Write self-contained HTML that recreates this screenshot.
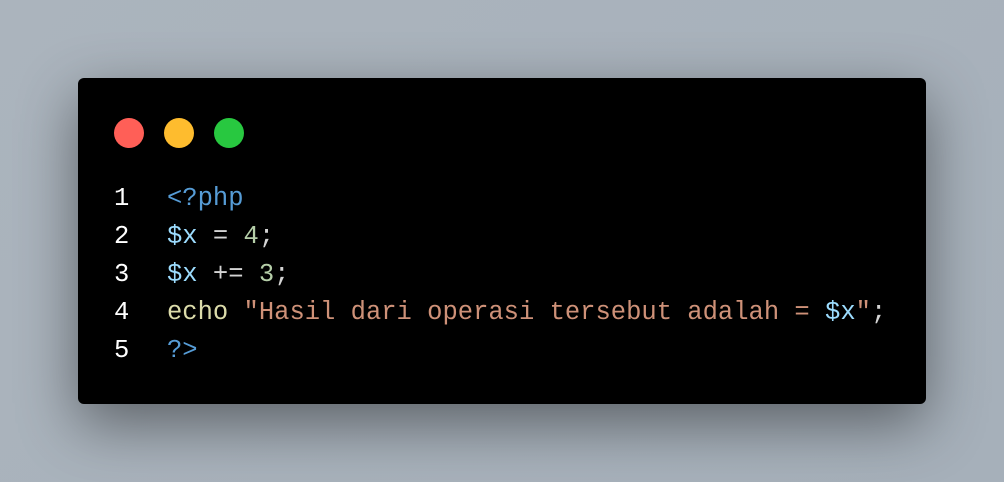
<!DOCTYPE html>
<html><head><style>
html,body{margin:0;padding:0}
body{width:1004px;height:482px;overflow:hidden;background:linear-gradient(135deg,#abb4bd,#a6b0ba);position:relative;font-family:"Liberation Mono",monospace}
.card{position:absolute;left:78px;top:78px;width:848px;height:326px;background:#000;border-radius:6px;box-shadow:0 20px 60px rgba(0,0,0,0.45)}
.dot{position:absolute;top:40px;width:30px;height:30px;border-radius:50%}
.code{position:absolute;left:0;top:102px;width:848px;font-size:25.5px;line-height:38px;color:#d4d4d4}
.row{position:relative;height:38px}
.ln{position:absolute;left:36px;width:20px;color:#fff}
.tx{position:absolute;left:89px;white-space:pre}
.k{color:#569cd6}.v{color:#9cdcfe}.n{color:#b5cea8}.f{color:#dcdcaa}.s{color:#ce9178}
</style></head><body>
<div class="card">
<div class="dot" style="left:36px;background:#ff5f57"></div>
<div class="dot" style="left:86px;background:#febc2e"></div>
<div class="dot" style="left:136px;background:#28c840"></div>
<div class="code"><div class="row"><span class="ln">1</span><span class="tx"><span class="k">&lt;?php</span></span></div><div class="row"><span class="ln">2</span><span class="tx"><span class="v">$x</span> = <span class="n">4</span>;</span></div><div class="row"><span class="ln">3</span><span class="tx"><span class="v">$x</span> += <span class="n">3</span>;</span></div><div class="row"><span class="ln">4</span><span class="tx"><span class="f">echo</span> <span class="s">"Hasil dari operasi tersebut adalah = </span><span class="v">$x</span><span class="s">"</span>;</span></div><div class="row"><span class="ln">5</span><span class="tx"><span class="k">?&gt;</span></span></div></div>
</div>
</body></html>
